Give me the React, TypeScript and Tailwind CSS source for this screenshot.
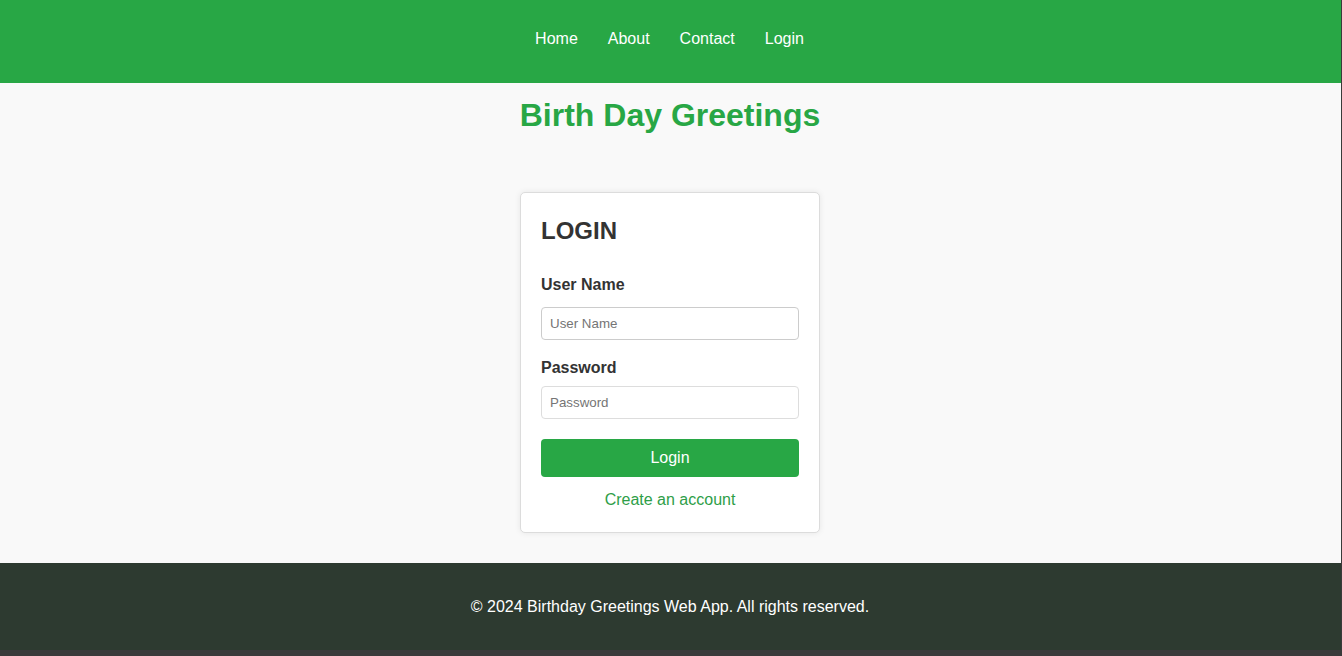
import React from 'react';

export default function App() {
  const links = ['Home', 'About', 'Contact', 'Login'];

  return (
    <div className="min-h-screen bg-[#f9f9f9] border-r border-[#3a3a3a] font-['Liberation_Sans',Arial,sans-serif] flex flex-col">
      <header className="h-[83px] bg-[#28a745] flex justify-center pt-[30px]">
        <nav className="flex gap-[30px] h-[18px] mr-[2px]">
          {links.map((l) => (
            <a key={l} href="#" className="text-white text-[16px] leading-[18px]">
              {l}
            </a>
          ))}
        </nav>
      </header>

      <main className="flex flex-col items-center pr-[1px]">
        <h1 className="mt-[14px] text-[32px] leading-[37px] font-bold text-[#28a745]">Birth Day Greetings</h1>

        <div className="mt-[58px] mb-[30px] w-[300px] bg-white border border-[#dcdcdc] rounded-[5px] shadow-[0_0_6px_rgba(0,0,0,0.08)] px-[20px] pt-[24px] pb-[23px]">
          <h2 className="text-[24px] leading-[28px] font-bold text-[#333]">LOGIN</h2>

          <label className="block mt-[31px] text-[16px] leading-[18px] font-bold text-[#333]">User Name</label>
          <input
            type="text"
            placeholder="User Name"
            className="block mt-[13px] w-full h-[33px] border border-[#ccc] rounded-[4px] px-[8px] text-[13.33px] text-[#333] placeholder:text-[#757575] bg-white outline-none"
          />

          <label className="block mt-[19px] text-[16px] leading-[18px] font-bold text-[#333]">Password</label>
          <input
            type="password"
            placeholder="Password"
            className="block mt-[9px] w-full h-[33px] border border-[#ddd] rounded-[4px] px-[8px] text-[13.33px] text-[#333] placeholder:text-[#757575] bg-white outline-none"
          />

          <button className="block mt-[20px] w-full h-[38px] bg-[#28a745] text-white text-[16px] rounded-[4px]">
            Login
          </button>

          <a href="#" className="block mt-[14px] text-center text-[16px] leading-[18px] text-[#2e9e48]">
            Create an account
          </a>
        </div>
      </main>

      <footer className="h-[87px] bg-[#2d3a30] flex items-center justify-center pr-[1px]">
        <p className="text-white text-[16px] leading-[18px]">© 2024 Birthday Greetings Web App. All rights reserved.</p>
      </footer>
      <div className="flex-1 bg-[#3a3a3a]" />
    </div>
  );
}
